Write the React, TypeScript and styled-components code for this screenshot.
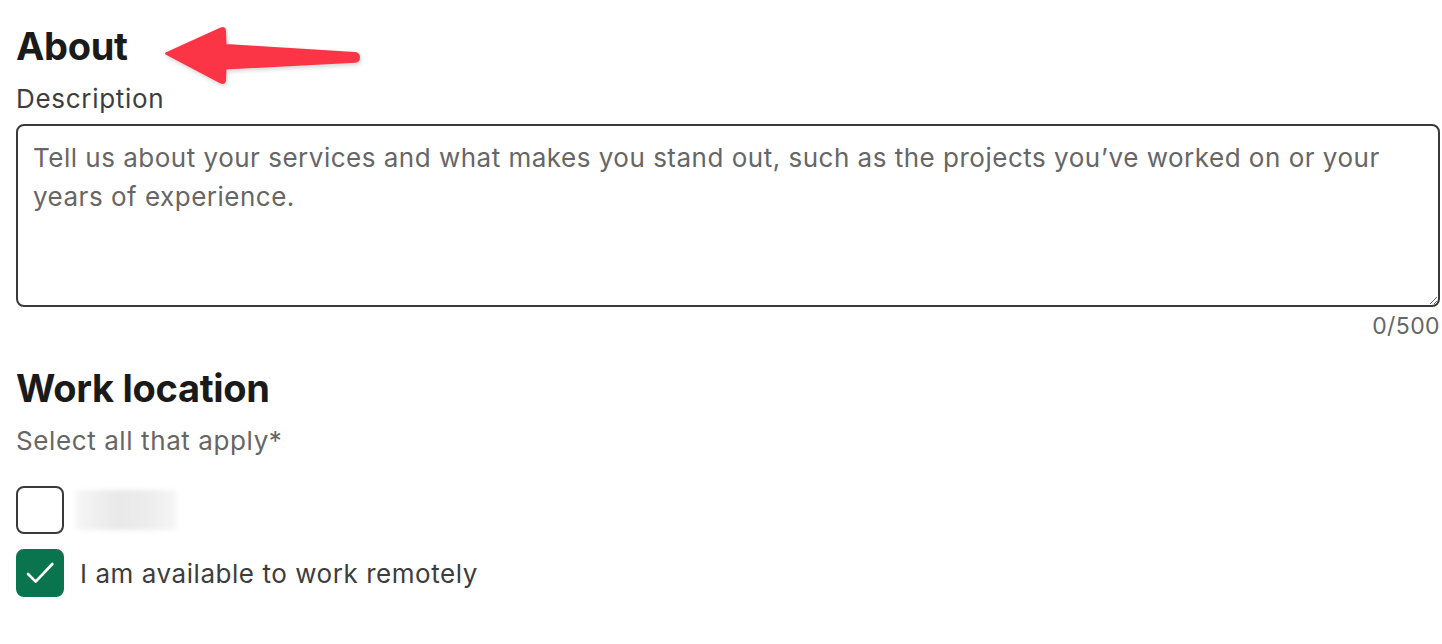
import styled, { createGlobalStyle } from 'styled-components';

const ink = "#1a1a1a";
const body = "#3d3d3d";
const muted = "#666666";
const green = "#0a744f";
const arrowRed = "#fb3446";

const GlobalStyle = createGlobalStyle`
  html, body {
    margin: 0;
    padding: 0;
    background: #ffffff;
  }
  body {
    font-family: Inter, "Noto Sans", "Liberation Sans", sans-serif;
    color: ${ink};
  }
`;

const Page = styled.div`
  position: relative;
  padding: 22px 2px 0 16px;
`;

const Heading = styled.h2<{ $gap?: number }>`
  margin: ${props => props.$gap || 0}px 0 0 0;
  font-size: 38px;
  line-height: 48px;
  font-weight: 700;
  letter-spacing: -0.3px;
  color: ${ink};
`;

const FieldLabel = styled.label`
  display: block;
  margin-top: 12px;
  font-size: 26px;
  line-height: 34px;
  letter-spacing: 0.7px;
  color: ${body};
`;

const TextArea = styled.textarea`
  display: block;
  box-sizing: border-box;
  width: 100%;
  height: 183px;
  margin-top: 8px;
  padding: 12px 15px;
  border: 2px solid #3a3a3a;
  border-radius: 8px;
  font-family: inherit;
  font-size: 26px;
  line-height: 39px;
  letter-spacing: 0.5px;
  color: ${ink};
  resize: vertical;
  outline: none;

  &::placeholder {
    color: ${muted};
  }
`;

const Counter = styled.div`
  text-align: right;
  font-size: 23px;
  line-height: 28px;
  letter-spacing: 0.4px;
  margin-top: 5px;
  color: ${muted};
`;

const Hint = styled.p`
  margin: 12px 0 0 0;
  font-size: 26px;
  line-height: 34px;
  letter-spacing: 0.6px;
  color: ${muted};
`;

const Options = styled.div`
  display: flex;
  flex-direction: column;
  gap: 15px;
  margin-top: 28px;
`;

const Option = styled.label`
  display: flex;
  align-items: center;
  gap: 16px;
  font-size: 26px;
  letter-spacing: 0.55px;
  color: ${body};
  cursor: pointer;
`;

const Box = styled.span<{ $checked?: boolean }>`
  box-sizing: border-box;
  width: 48px;
  height: 48px;
  flex: none;
  border-radius: 8px;
  display: flex;
  align-items: center;
  justify-content: center;
  border: 2px solid ${props => (props.$checked ? green : "#3a3a3a")};
  background: ${props => (props.$checked ? green : "#ffffff")};
`;

const Blurred = styled.span`
  display: block;
  width: 100px;
  height: 40px;
  margin-left: -4px;
  background: linear-gradient(90deg, #f6f6f6, #e9e9e9 40%, #ececec 70%, #f6f6f6);
  filter: blur(2px);
`;

const Arrow = styled.svg`
  position: absolute;
  left: 160px;
  top: 22px;
  filter: drop-shadow(1px 2px 2px rgba(0, 0, 0, 0.18));
`;

function Check() {
  return (
    <svg width="40" height="40" viewBox="0 0 24 24" fill="none">
      <path d="M4.8 12.6l4.6 4.6L19.4 6.6" stroke="#ffffff" strokeWidth="1.6" strokeLinecap="round" strokeLinejoin="round" />
    </svg>
  );
}

function App() {
  return (
    <Page>
      <GlobalStyle />
      <Heading>About</Heading>
      <Arrow width="204" height="66" viewBox="160 22 204 66">
        <path
          d="M166 53.5 L221 28.5 Q225 27 225 31 L225.5 45 L355 53 Q359 53.5 359 57.5 Q359 61.5 355 61.8 L225.5 68.5 L225 80 Q225 84 221 82.5 Z"
          fill={arrowRed}
          stroke={arrowRed}
          strokeWidth="2"
          strokeLinejoin="round"
        />
      </Arrow>
      <FieldLabel htmlFor="description">Description</FieldLabel>
      <TextArea
        id="description"
        placeholder="Tell us about your services and what makes you stand out, such as the projects you’ve worked on or your years of experience."
      />
      <Counter>0/500</Counter>
      <Heading $gap={24}>Work location</Heading>
      <Hint>Select all that apply*</Hint>
      <Options>
        <Option>
          <Box />
          <Blurred />
        </Option>
        <Option>
          <Box $checked>
            <Check />
          </Box>
          I am available to work remotely
        </Option>
      </Options>
    </Page>
  );
}

export default App;
